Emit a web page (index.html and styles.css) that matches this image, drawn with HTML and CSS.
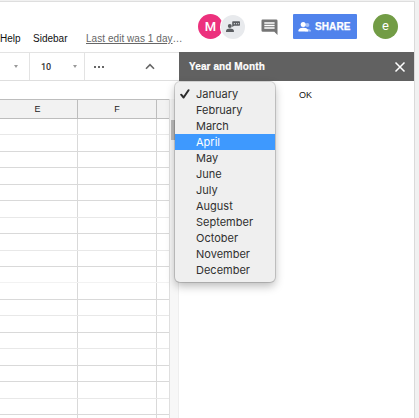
FILE: index.html
```html
<!DOCTYPE html>
<html lang="en">
<head>
<meta charset="utf-8">
<title>Spreadsheet</title>
<link rel="stylesheet" href="styles.css">
</head>
<body>
<div class="window">
  <header class="topbar">
    <nav class="menus">
      <span class="help">Help</span><span class="sidebar-menu">Sidebar</span><span class="last-edit"><u>Last edit was 1 day</u>…</span>
    </nav>
    <div class="actions">
      <span class="avatar pink">M</span>
      <span class="avatar chat">
        <svg width="24" height="24" viewBox="0 0 24 24"><g fill="#5b5e62"><circle cx="8.8" cy="11" r="2"/><path d="M5 17v-1.3c0-1.5 2.3-2.2 3.9-2.2s4 .7 4 2.2V17z"/><path d="M12 6.2h6.2q.8 0 .8.8v3q0 .8-.8.8h-5l-2 1.2V7q0-.8.8-.8z"/></g><path d="M12.8 8.6h1.2m1 0h1.1m1 0h1" stroke="#c9cbce" stroke-width="1.1"/></svg>
      </span>
      <svg class="comment" width="17" height="17" viewBox="0 0 17 17"><path fill="#757575" d="M1.5.5h13.7q1.3 0 1.3 1.3V16l-3.2-3.2H1.8Q.5 12.800.5 11.500V1.800Q.5.5 1.500.5z"/><path d="M3.300 4h10.300M3.300 6.500h10.300M3.300 9h10.300" stroke="#fff" stroke-width="1.300"/></svg>
      <button class="share">
        <svg width="14" height="12" viewBox="0 0 14 12"><g fill="#a5c0f6"><circle cx="9.300" cy="4" r="2.100"/><path d="M7 10.500V8.300c2-.8 6-.3 6 1.500v.7z"/></g><g fill="#fff"><circle cx="5.200" cy="3.400" r="2.500"/><path d="M.5 10.500V9.300c0-1.700 3-2.500 4.800-2.500s4.700.8 4.700 2.500v1.200z"/></g></svg>
        <span>SHARE</span>
      </button>
      <span class="avatar green">e</span>
    </div>
  </header>
  <main class="workspace">
    <section class="sheet">
      <div class="toolbar">
        <div class="font-menu"><i class="caret"></i></div>
        <div class="size-menu"><span>10</span><i class="caret"></i></div>
        <div class="more"><span class="dots"><i></i><i></i><i></i></span><svg width="10" height="7" viewBox="0 0 10 7"><path d="M1 5.700 5 1.600l4 4.100" fill="none" stroke="#666" stroke-width="1.600"/></svg></div>
      </div>
      <div class="formula"></div>
      <div class="grid-area">
        <div class="grid">
          <div class="row head"><span>E</span><span>F</span><span></span></div>
          <div class="row light"><span></span><span></span><span></span></div>
          <div class="row tall"><span></span><span></span><span></span></div>
          <div class="row"><span></span><span></span><span></span></div>
          <div class="row tall"><span></span><span></span><span></span></div>
          <div class="row"><span></span><span></span><span></span></div>
          <div class="row tall light"><span></span><span></span><span></span></div>
          <div class="row"><span></span><span></span><span></span></div>
          <div class="row tall light"><span></span><span></span><span></span></div>
          <div class="row"><span></span><span></span><span></span></div>
          <div class="row faint"><span></span><span></span><span></span></div>
          <div class="row tall"><span></span><span></span><span></span></div>
          <div class="row light"><span></span><span></span><span></span></div>
          <div class="row tall"><span></span><span></span><span></span></div>
          <div class="row light"><span></span><span></span><span></span></div>
          <div class="row tall"><span></span><span></span><span></span></div>
          <div class="row"><span></span><span></span><span></span></div>
          <div class="row tall light"><span></span><span></span><span></span></div>
          <div class="row"><span></span><span></span><span></span></div>
          <div class="row"><span></span><span></span><span></span></div>
        </div>
        <div class="scrollbar"><div class="thumb"></div></div>
      </div>
    </section>
    <aside class="panel">
      <div class="panel-head"><span>Year and Month</span><svg width="12" height="12" viewBox="0 0 12 12"><path d="M1.500 1.500l9 9m0-9l-9 9" stroke="#fff" stroke-width="1.500"/></svg></div>
      <div class="panel-body"><span>OK</span></div>
      <ul class="months">
        <li><svg class="check" width="10" height="10" viewBox="0 0 10 10"><path d="M1.200 5.700 3.600 8.500 8.500 1.200" fill="none" stroke="#2c2c2c" stroke-width="2" stroke-linecap="round" stroke-linejoin="round"/></svg>January</li>
        <li>February</li><li>March</li><li class="active">April</li><li>May</li><li>June</li><li>July</li><li>August</li><li>September</li><li>October</li><li>November</li><li>December</li>
      </ul>
    </aside>
  </main>
</div>
</body>
</html>
```
FILE: styles.css
```css
* { box-sizing: border-box; }
body {
  margin: 0;
  width: 419px;
  height: 418px;
  overflow: hidden;
  background: #f1f1f1;
  font-family: "Liberation Sans", Arial, sans-serif;
  color: #111;
}
.window {
  width: 415px;
  height: 417px;
  margin-top: 1px;
  border-top: 1px solid #dedede;
  border-right: 1px solid #dadada;
  background: #fff;
  display: flex;
  flex-direction: column;
}
.topbar {
  flex: 0 0 50px;
  display: flex;
}
.menus {
  width: 198px;
  padding-top: 30px;
  display: flex;
  font-size: 10px;
  line-height: 13px;
  white-space: nowrap;
}
.help { width: 33px; }
.sidebar-menu { width: 53px; }
.last-edit { color: #666; letter-spacing: .05px; }
.actions { display: flex; flex: 1; }
.avatar {
  width: 24px;
  height: 24px;
  margin-top: 13px;
  border-radius: 50%;
  color: #fff;
  text-align: center;
  flex: none;
}
.pink {
  width: 25px;
  height: 25px;
  margin-top: 12px;
  background: #ec317d;
  font: 500 13px/26px Roboto, sans-serif;
}
.chat {
  margin-left: -2px;
  background: #e8eaed;
  box-shadow: 0 0 0 1px #fff;
}
.chat svg { display: block; }
.comment { margin: 17px 0 0 16px; flex: none; }
.share {
  width: 64px;
  height: 25px;
  margin: 12px 0 0 15px;
  padding: 0 0 0 5px;
  border: 0;
  border-radius: 1px;
  background: #5083ec;
  color: #fff;
  display: flex;
  align-items: center;
  gap: 3px;
  font: bold 10px/13px "Liberation Sans", Arial, sans-serif;
  letter-spacing: .1px;
  -webkit-text-stroke: .25px #fff;
}
.share svg { flex: none; }
.green {
  width: 25px;
  height: 25px;
  margin: 12px 0 0 16px;
  background: #729c45;
  font: 13px/23px Roboto, sans-serif;
}
.workspace { display: flex; flex: 1; min-height: 0; }
.sheet { width: 179px; display: flex; flex-direction: column; }
.toolbar {
  flex: 0 0 29px;
  display: flex;
  border-top: 1px solid #e3e3e3;
  border-bottom: 1px solid #dedede;
}
.toolbar > div { display: flex; align-items: center; border-right: 1px solid #e3e3e3; }
.font-menu { width: 30px; padding-left: 14px; }
.size-menu { width: 55px; padding-left: 11px; font: 500 9px/12px Roboto, sans-serif; color: #333; }
.size-menu .caret { margin-left: 22px; }
.caret { border: 2px solid transparent; border-top: 3px solid #999; border-bottom: 0; }
.toolbar > .more { flex: 1; padding-left: 9px; border-right: 0; }
.dots { display: flex; gap: 2px; width: 51px; }
.dots i { width: 2px; height: 2px; background: #666; }
.formula { flex: 0 0 18px; }
.grid-area { flex: 1; display: flex; min-height: 0; }
.grid { width: 170px; border-right: 1px solid #dfdfdf; }
.row {
  height: 16px;
  display: grid;
  grid-template-columns: 78px 79px 1fr;
  border-bottom: 1px solid #d9d9d9;
}
.tall { height: 17px; }
.light { border-bottom-color: #e8e8e8; }
.faint { border-bottom-color: #f2f2f2; }
.row span { border-right: 1px solid #d9d9d9; }
.row span:last-child { border-right: 0; }
.row.head {
  height: 20px;
  background: #f2f2f2;
  border-top: 1px solid #bdbdbd;
  border-bottom-color: #bdbdbd;
  font: 9px/18px "Liberation Sans", Arial, sans-serif;
  color: #222;
  text-align: center;
}
.row.head span { border-color: #bdbdbd; }
.row.head span:first-child { padding-right: 2px; }
.scrollbar {
  width: 9px;
  border-right: 1px solid #eee;
  background: #f7f7f7;
  padding: 21px 0 0 1px;
}
.thumb { height: 20px; background: #bdbdbd; }
.panel { position: relative; flex: 1; }
.panel-head {
  height: 29px;
  padding: 0 8px 0 10px;
  background: #616161;
  color: #fff;
  display: flex;
  align-items: center;
  justify-content: space-between;
  font-size: 10px;
  font-weight: bold;
  letter-spacing: .1px;
  -webkit-text-stroke: .2px #fff;
}
.panel-head svg { margin-top: 1px; }
.panel-body { padding: 8px 0 0 120px; font: 9px/12px "Liberation Sans", Arial, sans-serif; }
.months {
  position: absolute;
  left: -4px;
  top: 30px;
  width: 100px;
  height: 200px;
  margin: 0;
  padding: 4px 0;
  list-style: none;
  background: #efefef;
  border-radius: 5px;
  box-shadow: 0 0 0 1px rgba(0, 0, 0, .15), 0 4px 10px rgba(0, 0, 0, .28);
  font: 11px/16px Inter, sans-serif;
  color: #303030;
}
.months li { height: 16px; padding-left: 21px; position: relative; }
.active { background: #3e99fe; color: #fff; }
.check { position: absolute; left: 5px; top: 3px; }
```
